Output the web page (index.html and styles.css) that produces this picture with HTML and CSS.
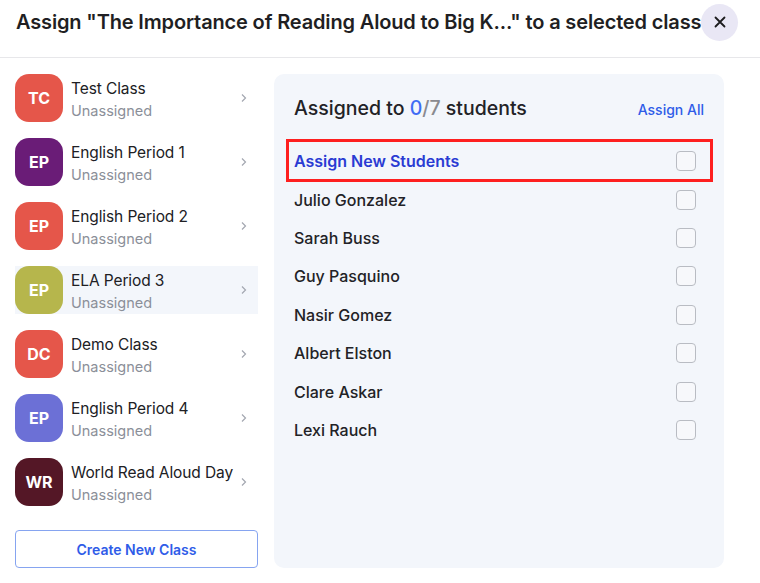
FILE: index.html
```html
<!DOCTYPE html>
<html lang="en">

<head>
    <meta charset="UTF-8">
    <meta name="viewport" content="width=device-width, initial-scale=1.0">
    <title>Assign to a class</title>
    <link rel="stylesheet" href="styles.css">
</head>

<body>

    <div class="modal">
        <header class="modal-head">
            <h1>Assign "The Importance of Reading Aloud to Big K..." to a selected class</h1>
            <button class="close-btn" aria-label="Close">
                <svg width="14" height="14" viewBox="0 0 14 14">
                    <path d="M2.5 2.5 L11.5 11.5 M11.5 2.5 L2.5 11.5" stroke="#1c1c1e" stroke-width="1.8" stroke-linecap="round" />
                </svg>
            </button>
        </header>

        <main class="modal-body">
            <section class="class-col">
                <ul class="class-list">
                    <li class="class-item">
                        <span class="avatar red">TC</span>
                        <span class="class-info"><span class="class-name">Test Class</span><span class="class-status">Unassigned</span></span>
                        <svg class="chevron" width="8" height="10" viewBox="0 0 8 10"><path d="M2 1.5 L5.5 5 L2 8.5" fill="none" stroke="#a3a7b0" stroke-width="1.2" /></svg>
                    </li>
                    <li class="class-item">
                        <span class="avatar purple">EP</span>
                        <span class="class-info"><span class="class-name">English Period 1</span><span class="class-status">Unassigned</span></span>
                        <svg class="chevron" width="8" height="10" viewBox="0 0 8 10"><path d="M2 1.5 L5.5 5 L2 8.5" fill="none" stroke="#a3a7b0" stroke-width="1.2" /></svg>
                    </li>
                    <li class="class-item">
                        <span class="avatar red">EP</span>
                        <span class="class-info"><span class="class-name">English Period 2</span><span class="class-status">Unassigned</span></span>
                        <svg class="chevron" width="8" height="10" viewBox="0 0 8 10"><path d="M2 1.5 L5.5 5 L2 8.5" fill="none" stroke="#a3a7b0" stroke-width="1.2" /></svg>
                    </li>
                    <li class="class-item active">
                        <span class="avatar olive">EP</span>
                        <span class="class-info"><span class="class-name">ELA Period 3</span><span class="class-status">Unassigned</span></span>
                        <svg class="chevron" width="8" height="10" viewBox="0 0 8 10"><path d="M2 1.5 L5.5 5 L2 8.5" fill="none" stroke="#a3a7b0" stroke-width="1.2" /></svg>
                    </li>
                    <li class="class-item">
                        <span class="avatar red">DC</span>
                        <span class="class-info"><span class="class-name">Demo Class</span><span class="class-status">Unassigned</span></span>
                        <svg class="chevron" width="8" height="10" viewBox="0 0 8 10"><path d="M2 1.5 L5.5 5 L2 8.5" fill="none" stroke="#a3a7b0" stroke-width="1.2" /></svg>
                    </li>
                    <li class="class-item">
                        <span class="avatar periwinkle">EP</span>
                        <span class="class-info"><span class="class-name">English Period 4</span><span class="class-status">Unassigned</span></span>
                        <svg class="chevron" width="8" height="10" viewBox="0 0 8 10"><path d="M2 1.5 L5.5 5 L2 8.5" fill="none" stroke="#a3a7b0" stroke-width="1.2" /></svg>
                    </li>
                    <li class="class-item">
                        <span class="avatar maroon">WR</span>
                        <span class="class-info"><span class="class-name">World Read Aloud Day</span><span class="class-status">Unassigned</span></span>
                        <svg class="chevron" width="8" height="10" viewBox="0 0 8 10"><path d="M2 1.5 L5.5 5 L2 8.5" fill="none" stroke="#a3a7b0" stroke-width="1.2" /></svg>
                    </li>
                </ul>
                <button class="create-btn">Create New Class</button>
            </section>

            <section class="student-panel">
                <div class="panel-head">
                    <h2>Assigned to <span class="count-done">0</span><span class="count-total">/7</span> students</h2>
                    <a href="#" class="assign-all">Assign All</a>
                </div>
                <ul class="student-list">
                    <li class="student-row new-students">
                        <span>Assign New Students</span>
                        <input type="checkbox" class="check">
                    </li>
                    <li class="student-row"><span>Julio Gonzalez</span><input type="checkbox" class="check"></li>
                    <li class="student-row"><span>Sarah Buss</span><input type="checkbox" class="check"></li>
                    <li class="student-row"><span>Guy Pasquino</span><input type="checkbox" class="check"></li>
                    <li class="student-row"><span>Nasir Gomez</span><input type="checkbox" class="check"></li>
                    <li class="student-row"><span>Albert Elston</span><input type="checkbox" class="check"></li>
                    <li class="student-row"><span>Clare Askar</span><input type="checkbox" class="check"></li>
                    <li class="student-row"><span>Lexi Rauch</span><input type="checkbox" class="check"></li>
                </ul>
            </section>
        </main>
    </div>

</body>

</html>
```

FILE: styles.css
```css
* {
    box-sizing: border-box;
}

body {
    margin: 0;
    background: #ffffff;
    font-family: Inter, "Noto Sans", sans-serif;
    color: #1f1f23;
}

.modal {
    width: 760px;
    height: 583px;
    overflow: hidden;
}

.modal-head {
    height: 58px;
    padding: 0 23px 0 16px;
    display: flex;
    align-items: center;
    justify-content: space-between;
    border-bottom: 1px solid #e7e7ea;
}

.modal-head h1 {
    margin: 0 0 13px;
    font-size: 20px;
    font-weight: 600;
    letter-spacing: -0.15px;
    white-space: nowrap;
}

.close-btn {
    width: 37px;
    height: 37px;
    margin-bottom: 13px;
    border: none;
    border-radius: 50%;
    background: #e9e7f5;
    display: flex;
    align-items: center;
    justify-content: center;
    padding: 0;
    flex-shrink: 0;
}

.modal-body {
    display: flex;
    gap: 16px;
    padding: 16px 36px 15px 15px;
    height: 525px;
}

/* left column: classes */
.class-col {
    width: 243px;
    display: flex;
    flex-direction: column;
}

.class-list {
    list-style: none;
    margin: 0;
    padding: 0;
}

.class-item {
    height: 48px;
    margin-bottom: 16px;
    display: flex;
    align-items: center;
    gap: 8px;
    padding-right: 10px;
}

.class-item.active {
    background: #f3f6fb;
}

.avatar {
    width: 48px;
    height: 48px;
    border-radius: 14px;
    display: flex;
    align-items: center;
    justify-content: center;
    color: #ffffff;
    font-size: 16px;
    font-weight: 700;
    flex-shrink: 0;
}

.red { background: #e5564a; }
.purple { background: #6a1c77; }
.olive { background: #b6b64c; }
.periwinkle { background: #6c70d6; }
.maroon { background: #541726; }

.class-info {
    flex: 1;
    min-width: 0;
    display: flex;
    flex-direction: column;
    gap: 2px;
    padding-top: 3px;
}

.class-name {
    font-size: 15.5px;
    line-height: 20px;
    letter-spacing: -0.1px;
    white-space: nowrap;
    color: #202024;
}

.class-status {
    font-size: 14.5px;
    line-height: 20px;
    color: #8b8f99;
}

.chevron {
    flex-shrink: 0;
}

.create-btn {
    margin-top: 8px;
    height: 38px;
    border: 1px solid #86a4f0;
    border-radius: 4px;
    background: #ffffff;
    color: #2f5ce8;
    font-family: inherit;
    font-size: 14px;
    font-weight: 600;
}

/* right panel: students */
.student-panel {
    flex: 1;
    background: #f3f6fb;
    border-radius: 10px;
    padding: 20px 20px 0 20px;
}

.panel-head {
    height: 28px;
    display: flex;
    align-items: center;
    justify-content: space-between;
}

.panel-head h2 {
    margin: 0;
    font-size: 19.5px;
    font-weight: 500;
    color: #222226;
}

.count-done {
    color: #3f6cf4;
}

.count-total {
    color: #8a8a8f;
}

.assign-all {
    margin-top: 3px;
    font-size: 14px;
    font-weight: 500;
    color: #2f5ce8;
    text-decoration: none;
}

.student-list {
    list-style: none;
    margin: 20px 0 0;
    padding: 0 8px 0 0;
}

.student-row {
    height: 38.4px;
    display: flex;
    align-items: center;
    justify-content: space-between;
    font-size: 16px;
    font-weight: 500;
    color: #222226;
}

.new-students {
    position: relative;
    color: #2a3bd3;
    font-weight: 600;
}

/* red highlight frame drawn over the first row */
.new-students::after {
    content: "";
    position: absolute;
    top: -3px;
    bottom: -2px;
    left: -8px;
    right: -17px;
    border: 3px solid #fe1f1f;
}

.check {
    appearance: none;
    margin: 0;
    width: 20px;
    height: 20px;
    border: 1px solid #b9bcc3;
    border-radius: 4px;
    background: #f7f8fb;
}
```
